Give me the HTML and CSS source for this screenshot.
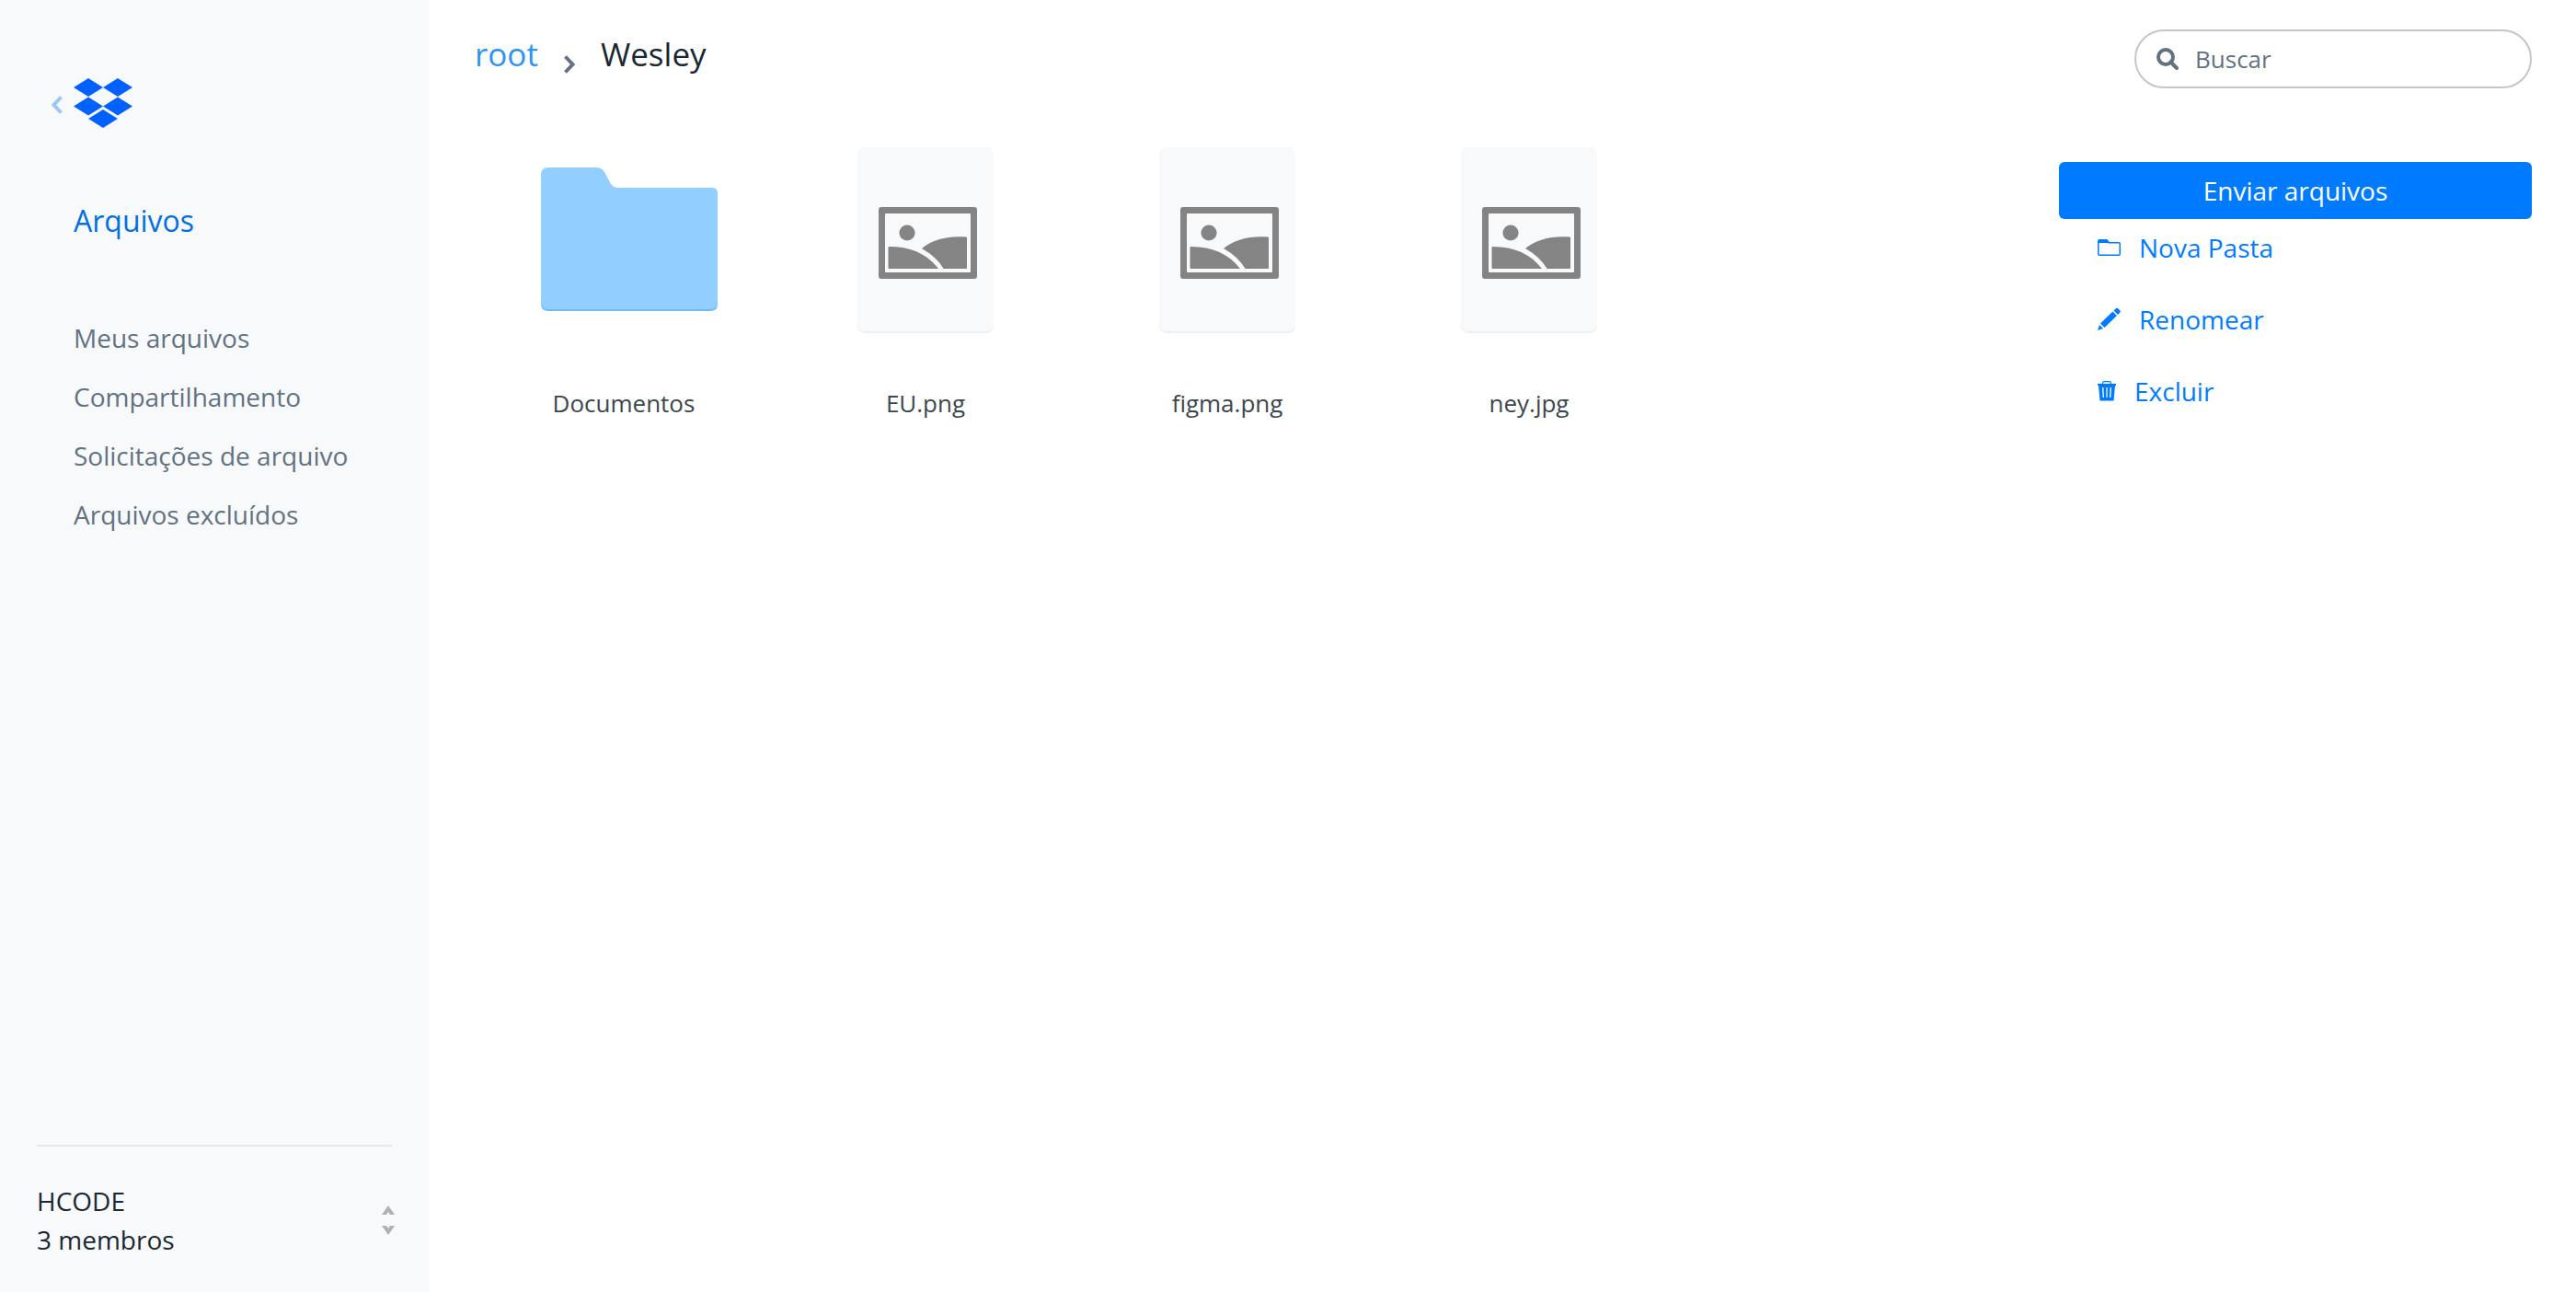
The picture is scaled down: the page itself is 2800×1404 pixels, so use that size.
FILE: index.html
```html
<!DOCTYPE html>
<html lang="pt-BR">
<head>
<meta charset="utf-8">
<title>Arquivos</title>
<link rel="stylesheet" href="styles.css">
</head>
<body>
<svg class="defs" aria-hidden="true">
  <symbol id="picture" viewBox="0 0 148 202">
    <rect y="2" width="148" height="200" rx="8" fill="#eef0f2"/>
    <rect width="148" height="200" rx="8" fill="#f7f9fb"/>
    <path fill="#848484" fill-rule="evenodd" d="M26 65h101q3 0 3 3v72q0 3-3 3H26q-3 0-3-3V68q0-3 3-3zm5 7q-1 0-1 1v62q0 1 1 1h91q1 0 1-1V73q0-1-1-1z"/>
    <circle cx="54" cy="93" r="8.5" fill="#848484"/>
    <path fill="#848484" d="M33.500 109q0-1 1-1C58 108 76 116 88 132H34.500q-1 0-1-1zM70 110C82 100 99 96 118 97.500q1 0 1 1V131q0 1-1 1H93.500Q86 119 70 110z"/>
  </symbol>
</svg>
<div class="app">
  <aside class="sidebar">
    <a class="brand" href="#" aria-label="Início">
      <svg class="brand-back" viewBox="0 0 12 20"><path d="M10.500 1.500 2.500 10l8 8.500" fill="none" stroke="#99c8f5" stroke-width="4"/></svg>
      <svg class="brand-logo" viewBox="0 0 64 54" fill="#0061ff"><path d="M16 0l16 10-16 10L0 10zM48 0l16 10-16 10-16-10zM16 20.500l16 10-16 10-16-10zM48 20.500l16 10-16 10-16-10z"/><path d="M32 34l16 10-16 10-16-10z"/></svg>
    </a>
    <a class="section-link" href="#">Arquivos</a>
    <nav class="menu">
      <a href="#">Meus arquivos</a>
      <a href="#">Compartilhamento</a>
      <a href="#">Solicitações de arquivo</a>
      <a href="#">Arquivos excluídos</a>
    </nav>
    <button class="team" type="button">
      <span>HCODE<br>3 membros</span>
      <svg class="team-arrows" viewBox="0 0 14 32" fill="#afb1b3"><path d="M0 10 7 0l7 10H9L7 7l-2 3zM0 22l7 10 7-10H9l-2 3-2-3z"/></svg>
    </button>
  </aside>
  <main class="main">
    <header class="topbar">
      <nav class="breadcrumb">
        <a href="#">root</a>
        <svg class="crumb-arrow" viewBox="0 0 12 20"><path d="M1.500 1.500l8 8.500-8 8.500" fill="none" stroke="#637282" stroke-width="4"/></svg>
        <span>Wesley</span>
      </nav>
      <label class="search">
        <svg class="search-icon" viewBox="0 0 24 24"><g fill="none" stroke="#637282" stroke-width="4"><circle cx="10" cy="10" r="8"/><path d="M15.500 15.500l6.500 6.500" stroke-linecap="round"/></g></svg>
        <input type="search" placeholder="Buscar" aria-label="Buscar">
      </label>
    </header>
    <div class="content">
      <ul class="files">
        <li class="file">
          <div class="file-icon"><svg class="folder" viewBox="0 0 192 156"><path fill="#71b9f4" d="M0 100h192v48q0 8-8 8H8q-8 0-8-8z"/><path fill="#92ceff" d="M8 0h52q6 0 9 5l7 13q3 4 8 4h102q6 0 6 6v118q0 8-8 8H8q-8 0-8-8V8q0-8 8-8z"/></svg></div>
          <div class="file-name">Documentos</div>
        </li>
        <li class="file"><div class="file-icon"><svg class="picture"><use href="#picture"/></svg></div><div class="file-name">EU.png</div></li>
        <li class="file"><div class="file-icon"><svg class="picture"><use href="#picture"/></svg></div><div class="file-name">figma.png</div></li>
        <li class="file"><div class="file-icon"><svg class="picture"><use href="#picture"/></svg></div><div class="file-name">ney.jpg</div></li>
      </ul>
      <div class="actions">
        <button class="upload" type="button">Enviar arquivos</button>
        <button class="action" type="button"><svg class="action-icon" viewBox="0 0 25 26"><path fill="#007bff" fill-rule="evenodd" d="M2 4h8q1 0 2 2l1 1h10q2 0 2 2v11q0 2-2 2H2q-2 0-2-2V6q0-2 2-2zM1.500 8v12.500h22v-12H12L11 8z"/></svg>Nova Pasta</button>
        <button class="action" type="button"><svg class="action-icon" viewBox="0 0 25 26"><path fill="#007bff" d="M0 25l2-6 4 4zM3 17.500 16.500 4.500l4.500 4.500L7.500 22zM17.500 3.500l2-2q1.500-1.500 3 0l1.500 1.500q1.500 1.500 0 3l-2 2z"/></svg>Renomear</button>
        <button class="action" type="button"><svg class="action-icon trash" viewBox="0 0 20 26"><path fill="#007bff" fill-rule="evenodd" d="M0 5h5V4q0-2 2-2h6q2 0 2 2v1h5v2h-1l-1.500 16.500H2.500L1 7H0zm6.200-1v1h7.600V4q0-.8-.8-.8H7q-.8 0-.8.800zM5 9l.7 11H7L6.400 9zm4.400 0v11h1.200V9zm4.200 0L13 20h1.300L15 9z"/></svg>Excluir</button>
      </div>
    </div>
  </main>
</div>
</body>
</html>
```
FILE: styles.css
```css
* { box-sizing: border-box; }
body {
  margin: 0;
  background: #fff;
  color: #1b2733;
  font: 28px/42px "Open Sans", "Noto Sans", sans-serif;
}
a { color: inherit; text-decoration: none; }
button {
  border: 0;
  background: none;
  padding: 0;
  color: inherit;
  font: inherit;
  cursor: pointer;
}
svg { display: block; flex: none; }
.defs { position: absolute; width: 0; height: 0; }
.app { display: flex; min-height: 100vh; }

.sidebar {
  display: flex;
  flex-direction: column;
  flex: none;
  width: 466px;
  padding: 85px 40px 36px;
  background: #f7f9fb;
}
.brand { display: flex; align-items: center; gap: 12px; padding-left: 16px; }
.brand-back { width: 12px; height: 20px; margin-top: 4px; }
.brand-logo { width: 64px; height: 54px; }
.section-link {
  padding-left: 40px;
  margin-top: 77px;
  color: #0070e0;
  font-size: 32px;
  line-height: 48px;
}
.menu {
  display: flex;
  flex-direction: column;
  gap: 22px;
  padding-left: 40px;
  margin-top: 82px;
  color: #637282;
}
.team {
  display: flex;
  justify-content: space-between;
  align-items: center;
  margin-top: auto;
  padding-top: 38px;
  border-top: 2px solid #e6e8eb;
  text-align: left;
}
.team-arrows { width: 14px; height: 32px; margin-right: -3px; }

.main { flex: 1; min-width: 0; padding: 32px 48px 32px 50px; }
.topbar { display: flex; justify-content: space-between; height: 64px; }
.breadcrumb {
  display: flex;
  align-items: center;
  height: 54px;
  font-size: 35px;
}
.breadcrumb a { color: #2e94f4; }
.crumb-arrow { width: 12px; height: 20px; margin: 22px 28px 0; }
.search {
  display: flex;
  align-items: center;
  gap: 18px;
  width: 432px;
  padding: 0 22px;
  border: 2px solid #c1c7cd;
  border-radius: 32px;
}
.search-icon { width: 24px; height: 24px; }
.search input {
  flex: 1;
  min-width: 0;
  padding: 0;
  border: 0;
  outline: 0;
  background: none;
  color: #637282;
  font: inherit;
  font-size: 26px;
}
.search input::placeholder { color: #637282; opacity: 1; }

.content { display: flex; justify-content: space-between; margin-top: 64px; }
.files {
  display: flex;
  flex-wrap: wrap;
  margin: 0 0 0 -2px;
  padding: 0;
  list-style: none;
}
.file { width: 328px; }
.file-icon { display: flex; justify-content: center; height: 257px; }
.folder { width: 192px; height: 156px; margin: 22px 0 0 12px; }
.picture { width: 148px; height: 202px; }
.file-name { color: #3d464d; font-size: 26px; text-align: center; }

.actions { flex: none; width: 514px; margin-top: 16px; }
.upload {
  width: 100%;
  height: 62px;
  border-radius: 6px;
  background: #007bff;
  color: #fff;
}
.action {
  display: flex;
  align-items: center;
  gap: 20px;
  height: 42px;
  margin: 10px 42px 36px;
  color: #007bff;
}
.action + .action { margin-top: 0; }
.action-icon { width: 25px; height: 26px; }
.trash { width: 20px; }
```
